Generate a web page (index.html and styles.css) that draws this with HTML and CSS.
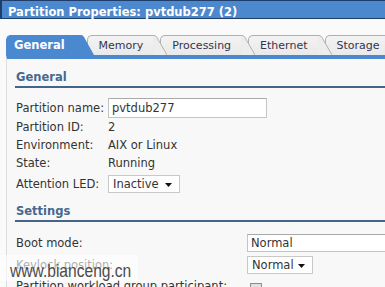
FILE: index.html
```html
<!DOCTYPE html>
<html>
<head>
<meta charset="utf-8">
<link rel="stylesheet" href="styles.css">
</head>
<body>
<div class="titlebar">Partition Properties: pvtdub277 (2)</div>
<div class="tabs">
  <div class="tab active"><span class="tab-label">General</span><svg class="ear" width="14" height="20" viewBox="0 0 14 20"><path d="M0 0 H1 Q3 0 4 2 L14 20 H0 Z" fill="#4a89d0"/></svg></div>
  <div class="tab"><span class="tab-label">Memory</span><svg class="ear" width="14" height="20" viewBox="0 0 14 20"><path d="M0 0.5 H1 Q3 0.5 4 2.5 L14 20 H0 Z" fill="#ededed"/><path d="M0 0.5 H1 Q3 0.5 4 2.5 L14 20" fill="none" stroke="#b0b0b0"/></svg></div>
  <div class="tab"><span class="tab-label">Processing</span><svg class="ear" width="14" height="20" viewBox="0 0 14 20"><path d="M0 0.5 H1 Q3 0.5 4 2.5 L14 20 H0 Z" fill="#ededed"/><path d="M0 0.5 H1 Q3 0.5 4 2.5 L14 20" fill="none" stroke="#b0b0b0"/></svg></div>
  <div class="tab"><span class="tab-label">Ethernet</span><svg class="ear" width="14" height="20" viewBox="0 0 14 20"><path d="M0 0.5 H1 Q3 0.5 4 2.5 L14 20 H0 Z" fill="#ededed"/><path d="M0 0.5 H1 Q3 0.5 4 2.5 L14 20" fill="none" stroke="#b0b0b0"/></svg></div>
  <div class="tab"><span class="tab-label">Storage</span><svg class="ear" width="14" height="20" viewBox="0 0 14 20"><path d="M0 0.5 H1 Q3 0.5 4 2.5 L14 20 H0 Z" fill="#ededed"/><path d="M0 0.5 H1 Q3 0.5 4 2.5 L14 20" fill="none" stroke="#b0b0b0"/></svg></div>
</div>
<div class="panel">
  <h2 class="section-title general-title">General</h2>
  <div class="fields general">
    <div class="row row-ctl"><span class="label">Partition name:</span><span class="input name-input">pvtdub277</span></div>
    <div class="row"><span class="label">Partition ID:</span><span class="value">2</span></div>
    <div class="row"><span class="label">Environment:</span><span class="value">AIX or Linux</span></div>
    <div class="row"><span class="label">State:</span><span class="value">Running</span></div>
    <div class="row row-ctl row-led"><span class="label">Attention LED:</span><span class="select led-select">Inactive<svg class="caret" width="7" height="4" viewBox="0 0 7 4"><path d="M0 0 H7 L3.5 4 Z" fill="#111"/></svg></span></div>
  </div>
  <h2 class="section-title settings-title">Settings</h2>
  <div class="fields settings">
    <div class="row row-ctl"><span class="label">Boot mode:</span><span class="input boot-input">Normal</span></div>
    <div class="row row-ctl row-key"><span class="label">Keylock position:</span><span class="select key-select">Normal<svg class="caret" width="7" height="4" viewBox="0 0 7 4"><path d="M0 0 H7 L3.5 4 Z" fill="#111"/></svg></span></div>
    <div class="row row-ctl row-wl"><span class="label">Partition workload group participant:</span><span class="checkbox"></span></div>
  </div>
</div>
<div class="watermark"><span class="wm-text">www.bianceng.cn</span></div>
</body>
</html>
```
FILE: styles.css
```css
html, body {
  margin: 0;
  padding: 0;
}
body {
  width: 385px;
  height: 287px;
  overflow: hidden;
  background: #fafafa;
  font-family: "DejaVu Sans", Verdana, sans-serif;
  font-size: 11.5px;
  color: #333;
  position: relative;
}
.titlebar {
  box-sizing: border-box;
  height: 19px;
  background: #4c88cd;
  border-top: 1px solid #1f3d6b;
  border-bottom: 1px solid #1f3d6b;
  border-left: 2px solid #1f3d6b;
  padding: 6px 0 0 6px;
  line-height: 11px;
  color: #fff;
  font-weight: bold;
  white-space: nowrap;
}
.tabs {
  display: flex;
  margin-top: 16px;
  padding-left: 6px;
  height: 20px;
}
.tab {
  display: flex;
  flex: none;
  height: 20px;
  margin-left: -7px;
}
.tab:nth-child(1) { margin-left: 0; z-index: 5; }
.tab:nth-child(2) { z-index: 4; }
.tab:nth-child(3) { z-index: 3; }
.tab:nth-child(4) { z-index: 2; }
.tab:nth-child(5) { z-index: 1; }
.tab-label {
  box-sizing: border-box;
  height: 20px;
  line-height: 19px;
  font-size: 11px;
  padding: 0 10px 0 11px;
  background: linear-gradient(#f3f3f3, #e9e9e9);
  border-top: 1px solid #b0b0b0;
  border-left: 1px solid #b0b0b0;
  border-top-left-radius: 5px;
  color: #34344e;
  white-space: nowrap;
}
.tab.active .tab-label {
  background: #4a89d0;
  border-color: #4a89d0;
  color: #fff;
  font-weight: bold;
  font-size: 11.5px;
  padding: 0 15px 0 7px;
}
.ear {
  display: block;
  flex: none;
}
.panel {
  margin-left: 6px;
  border-left: 1px solid #dcdde1;
  border-top: 4px solid #4a89d0;
  background: #f8f8f8;
  padding-left: 8px;
  height: 240px;
}
.section-title {
  margin: 0;
  font-size: 11.5px;
  font-weight: bold;
  color: #46688f;
  line-height: 14px;
  padding: 0 0 2px 1px;
  border-bottom: 2px solid #44648a;
}
.general-title { margin-top: 11px; }
.settings-title { margin-top: 10px; }
.fields {
  padding-left: 1px;
}
.general { margin-top: 10px; }
.settings { margin-top: 11px; }
.row {
  display: flex;
  align-items: center;
  height: 18px;
  line-height: 18px;
  white-space: nowrap;
}
.row-ctl {
  height: 20px;
  line-height: 20px;
}
.row-led { margin-top: 2px; }
.row-key { margin-top: 2px; }
.row-wl { margin-top: 1px; }
.label {
  flex: none;
  width: 92px;
}
.settings .label { width: 231px; }
.input {
  box-sizing: border-box;
  display: block;
  background: #fff;
  border: 1px solid #c4c4c4;
  border-top-color: #aaaaaa;
  padding-left: 3px;
  white-space: nowrap;
}
.name-input {
  width: 159px;
  height: 20px;
  line-height: 18px;
}
.boot-input {
  flex: none;
  width: 160px;
  height: 18px;
  line-height: 16px;
}
.select {
  box-sizing: border-box;
  display: flex;
  align-items: center;
  background: #fff;
  border: 1px solid #c8c8c8;
  height: 18px;
  line-height: 16px;
  padding-left: 4px;
}
.led-select { width: 72px; }
.key-select { width: 66px; }
.caret {
  margin-left: auto;
  margin-right: 7px;
  margin-top: 2px;
}
.checkbox {
  box-sizing: border-box;
  display: block;
  width: 12px;
  height: 12px;
  margin: 5px 0 0 3px;
  border: 1px solid #8f8f8f;
  background: linear-gradient(#dcdcdc, #fafafa);
}
.watermark {
  position: absolute;
  left: 0;
  top: 255px;
  width: 138px;
  height: 26px;
  box-sizing: border-box;
  padding: 4px 0 0 10px;
  line-height: 24px;
  background: rgba(255, 255, 255, 0.6);
  font-family: "Liberation Sans", Arial, sans-serif;
  font-size: 19px;
  color: #4c4c4c;
  white-space: nowrap;
}
.wm-text {
  display: inline-block;
  transform: scaleX(0.82);
  transform-origin: left center;
}
```
